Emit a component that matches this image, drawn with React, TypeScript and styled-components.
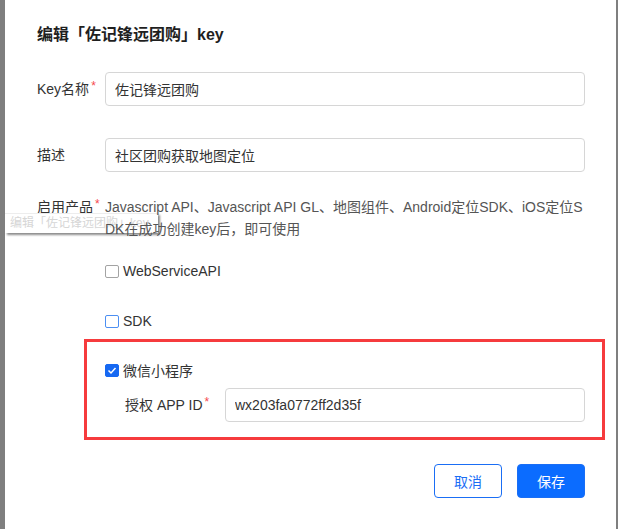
import React from "react";
import styled, { createGlobalStyle } from "styled-components";

const GlobalStyle = createGlobalStyle`
  html, body {
    margin: 0;
    padding: 0;
    background: #7f7f7f;
    font-family: "Liberation Sans", "Noto Sans CJK SC", sans-serif;
  }
  * {
    box-sizing: border-box;
  }
`;

const Page = styled.div`
  display: flex;
  height: 529px;
  padding-left: 5px;
  overflow: hidden;
`;

const Dialog = styled.div`
  position: relative;
  width: 611px;
  background: #fff;
  padding: 23px 31px 0 32px;
`;

const Title = styled.div`
  font-size: 16px;
  font-weight: bold;
  line-height: 24px;
  color: #1f1f1f;
  margin-bottom: 25px;
`;

const Row = styled.div<{ $gap?: number; $top?: boolean }>`
  display: flex;
  align-items: ${({ $top }) => ($top ? "flex-start" : "center")};
  margin-bottom: ${({ $gap }) => $gap ?? 0}px;
`;

const Label = styled.div<{ $width?: number }>`
  width: ${({ $width }) => $width ?? 68}px;
  flex-shrink: 0;
  font-size: 14px;
  line-height: 22px;
  color: #333;
  white-space: nowrap;
`;

const Star = styled.sup`
  color: #f5484d;
  font-size: 12px;
  margin-left: 2px;
  vertical-align: 4px;
  line-height: 0;
`;

const TextInput = styled.input`
  flex: 1;
  height: 34px;
  border: 1px solid #d6d6d6;
  border-radius: 4px;
  padding: 0 9px;
  font-family: inherit;
  font-size: 14px;
  color: #333;
  outline: none;
  background: #fff;
`;

const Column = styled.div`
  width: 480px;
  display: flex;
  flex-direction: column;
`;

const Desc = styled.div`
  position: relative;
  z-index: 1;
  font-size: 14px;
  line-height: 22px;
  color: #555;
  word-break: break-all;
`;

const CheckRow = styled.label<{ $gap: number }>`
  display: flex;
  align-items: center;
  height: 20px;
  margin-top: ${({ $gap }) => $gap}px;
  font-size: 14px;
  color: #333;
`;

const Box = styled.span<{ $state: "off" | "hover" | "on" }>`
  width: 14px;
  height: 13px;
  margin-right: 4px;
  border-radius: 2px;
  display: inline-flex;
  align-items: center;
  justify-content: center;
  border: 1px solid
    ${({ $state }) =>
      $state === "off" ? "#a3a3a3" : $state === "hover" ? "#4c8ff2" : "#1668f2"};
  background: ${({ $state }) => ($state === "on" ? "#1668f2" : "#fff")};
`;

const Highlight = styled.div`
  margin: 8px 0 0 -21px;
  width: 521px;
  border: 3px solid #f63b3d;
  padding: 18px 17px 15px 18px;
`;

const SubRow = styled.div`
  display: flex;
  align-items: center;
  margin-top: 8px;
  padding-left: 20px;
`;

const Footer = styled.div`
  display: flex;
  justify-content: flex-end;
  gap: 15px;
  margin-top: 24px;
`;

const Button = styled.button<{ $primary?: boolean }>`
  width: 68px;
  height: 34px;
  border-radius: 4px;
  font-family: inherit;
  font-size: 14px;
  border: 1px solid #1a6ef5;
  color: ${({ $primary }) => ($primary ? "#fff" : "#1a6ef5")};
  background: ${({ $primary }) => ($primary ? "#0b6cff" : "#fff")};
`;

/* leftover drag ghost of the title, floating over the form */
const Ghost = styled.div`
  position: absolute;
  left: 0;
  top: 213px;
  width: 153px;
  height: 20px;
  padding-left: 5px;
  font-size: 12px;
  line-height: 19px;
  color: #d6d6d6;
  background: rgba(255, 255, 255, 0.2);
  border-top: 1px solid #ededed;
  box-shadow: 2px 2px 2px rgba(0, 0, 0, 0.45);
  white-space: nowrap;
  pointer-events: none;
`;

const Check = () => (
  <svg width="10" height="9" viewBox="0 0 10 9">
    <path d="M1.5 4.5 L4 7 L8.5 2" fill="none" stroke="#fff" strokeWidth="1.5" />
  </svg>
);

const App = (): JSX.Element => {
  return (
    <>
      <GlobalStyle />
      <Page>
        <Dialog>
          <Title>编辑「佐记锋远团购」key</Title>
          <Row $gap={32}>
            <Label>
              Key名称<Star>*</Star>
            </Label>
            <TextInput defaultValue="佐记锋远团购" readOnly />
          </Row>
          <Row $gap={24}>
            <Label>描述</Label>
            <TextInput defaultValue="社区团购获取地图定位" readOnly />
          </Row>
          <Row $top>
            <Label>
              启用产品<Star>*</Star>
            </Label>
            <Column>
              <Desc>
                Javascript API、Javascript API GL、地图组件、Android定位SDK、iOS定位SDK在成功创建key后，即可使用
              </Desc>
              <CheckRow $gap={21}>
                <Box $state="off" />
                WebServiceAPI
              </CheckRow>
              <CheckRow $gap={30}>
                <Box $state="hover" />
                SDK
              </CheckRow>
              <Highlight>
                <CheckRow $gap={0}>
                  <Box $state="on">
                    <Check />
                  </Box>
                  微信小程序
                </CheckRow>
                <SubRow>
                  <Label $width={100}>
                    授权 APP ID<Star>*</Star>
                  </Label>
                  <TextInput defaultValue="wx203fa0772ff2d35f" readOnly />
                </SubRow>
              </Highlight>
            </Column>
          </Row>
          <Footer>
            <Button>取消</Button>
            <Button $primary>保存</Button>
          </Footer>
          <Ghost>编辑「佐记锋远团购」key</Ghost>
        </Dialog>
      </Page>
    </>
  );
};

export default App;
